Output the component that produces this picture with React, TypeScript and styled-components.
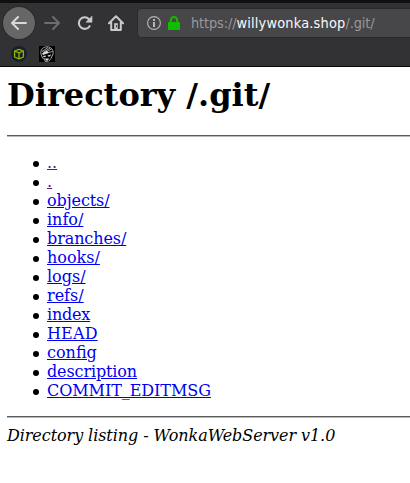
import React from "react";
import styled, { createGlobalStyle } from "styled-components";

const GlobalStyle = createGlobalStyle`
  html, body { margin: 0; padding: 0; background: #fff; overflow: hidden; }
  * { box-sizing: border-box; }
`;

const Window = styled.div`
  width: 100%;
  height: 483px;
  display: flex;
  flex-direction: column;
  overflow: hidden;
  background: #fff;
`;

const Chrome = styled.header`
  flex: none;
  height: 67px;
  border-top: 3px solid #101011;
  border-bottom: 1px solid #0a0a0b;
  background: #323234;
  display: flex;
  flex-direction: column;
`;

const Toolbar = styled.div`
  display: flex;
  align-items: center;
  height: 40px;
  padding-left: 3px;
`;

const BackButton = styled.button`
  width: 32px;
  height: 32px;
  flex: none;
  border: 0;
  padding: 0;
  border-radius: 50%;
  background: #666667;
  box-shadow: 0 0 0 1px #29292b;
  display: grid;
  place-items: center;
`;

const ToolButton = styled.button<{ $width?: number }>`
  width: ${(p) => p.$width ?? 32}px;
  height: 32px;
  flex: none;
  border: 0;
  padding: 0;
  background: none;
  display: grid;
  place-items: center;
`;

const Glyph = styled.svg`
  display: block;
  flex: none;
`;

const AddressBar = styled.div`
  flex: 1;
  height: 30px;
  margin-left: 5px;
  margin-right: -6px;
  padding-left: 9px;
  border: 1px solid #29292b;
  border-radius: 4px;
  background: #474749;
  display: flex;
  align-items: center;
  gap: 6px;
`;

const Url = styled.span`
  margin-left: 4px;
  font: 14.4px/20px "DejaVu Sans Condensed", "DejaVu Sans", sans-serif;
  font-stretch: condensed;
  letter-spacing: -0.13px;
  color: #98989a;
  white-space: pre;
`;

const Host = styled.span`
  color: #f9f9fa;
  letter-spacing: 0.2px;
`;

const Bookmarks = styled.div`
  display: flex;
  align-items: center;
  gap: 12px;
  height: 21px;
  padding-left: 11px;
`;

const Page = styled.main`
  padding-left: 7px;
  font: 16px/19px "DejaVu Serif", serif;
  color: #000;
`;

const Title = styled.h1`
  margin: 9px 0 21px;
  font-size: 32px;
  line-height: 38px;
  font-weight: bold;
`;

const Rule = styled.hr`
  margin: 0;
  border: 0;
  height: 2px;
  background: linear-gradient(#5b5b5b 50%, #b9b9b9 50%);
`;

const Listing = styled.ul`
  margin: 16px 0;
  padding-left: 26px;
  list-style: none;
`;

const Entry = styled.li`
  height: 19px;
  display: flex;
  align-items: flex-start;

  &::before {
    content: "";
    flex: none;
    width: 6px;
    height: 6px;
    margin: 8px 8px 0 0;
    border-radius: 50%;
    background: #000;
  }
`;

const EntryLink = styled.a<{ $visited?: boolean; $tracking?: number }>`
  color: ${(p) => (p.$visited ? "#551a8b" : "#0000ee")};
  text-decoration: underline;
  letter-spacing: ${(p) => (p.$tracking ? `${p.$tracking}px` : "normal")};
`;

const Footer = styled.address`
  margin-top: 8px;
  font-style: italic;
  letter-spacing: -0.075px;
`;

const entries: { name: string; visited?: boolean; tracking?: number }[] = [
  { name: "..", visited: true },
  { name: ".", visited: true },
  { name: "objects/", tracking: -0.1 },
  { name: "info/" },
  { name: "branches/", tracking: -0.1 },
  { name: "hooks/" },
  { name: "logs/" },
  { name: "refs/" },
  { name: "index", tracking: -0.2 },
  { name: "HEAD", tracking: 0.15 },
  { name: "config" },
  { name: "description", tracking: -0.12 },
  { name: "COMMIT_EDITMSG", tracking: -0.06 },
];

const Arrow = ({ color, flip }: { color: string; flip?: boolean }) => (
  <Glyph width="16" height="16" viewBox="0 0 16 16" fill="none" stroke={color} strokeWidth="2" strokeLinecap="round" strokeLinejoin="round">
    <path d={flip ? "M1 8H15M9 2L15 8L9 14" : "M15 8H1M7 2L1 8L7 14"} />
  </Glyph>
);

export default function App() {
  return (
    <Window>
      <GlobalStyle />
      <Chrome>
        <Toolbar>
          <BackButton aria-label="Back"><Arrow color="#d8d8d9" /></BackButton>
          <ToolButton aria-label="Forward" $width={34}><Arrow color="#6d6d6f" flip /></ToolButton>
          <ToolButton aria-label="Reload" $width={31}>
            <Glyph width="16" height="16" viewBox="0 0 16 16">
              <path d="M12 4.2A5.8 5.8 0 1 0 12.6 11.2" fill="none" stroke="#c9c9ca" strokeWidth="2.1" strokeLinecap="round" />
              <path d="M15 1.2V7.2H9Z" fill="#c9c9ca" stroke="#c9c9ca" strokeWidth=".6" strokeLinejoin="round" />
            </Glyph>
          </ToolButton>
          <ToolButton aria-label="Home">
            <Glyph width="16" height="16" viewBox="0 0 16 16" fill="none" stroke="#c9c9ca" strokeWidth="2" strokeLinecap="round" strokeLinejoin="round">
              <path d="M1 8.3L8 1.3L15 8.3M3.2 7.5V15H12.8V7.5" />
              <path d="M6.2 14V8.2H9.8V14Z" fill="#c9c9ca" stroke="none" />
              <path d="M8.6 10.5V12" stroke="#323234" strokeWidth="1" />
            </Glyph>
          </ToolButton>
          <AddressBar>
            <Glyph width="14" height="14" viewBox="0 0 14 14">
              <circle cx="7" cy="7" r="6.4" fill="none" stroke="#b5b5b6" strokeWidth="1.1" />
              <path d="M7 3V5M7 6V11" stroke="#b5b5b6" strokeWidth="2" />
            </Glyph>
            <Glyph width="14" height="16" viewBox="0 0 14 16">
              <rect x="1" y="7" width="12" height="8" rx="1" fill="#12bc00" />
              <path d="M3.8 8V5.2a3.2 3.2 0 0 1 6.4 0V8" fill="none" stroke="#12bc00" strokeWidth="2" />
            </Glyph>
            <Url>https://<Host>willywonka.shop</Host>/.git/</Url>
          </AddressBar>
        </Toolbar>
        <Bookmarks>
          <Glyph width="16" height="16" viewBox="0 0 16 16">
            <circle cx="8" cy="8" r="8" fill="#1a202a" />
            <path d="M8 3.4L12.4 5V11L8 12.8L3.6 11V5ZM3.6 5L8 6.8L12.4 5M8 6.8V12.8" fill="none" stroke="#8db600" strokeWidth="1.3" strokeLinejoin="round" />
          </Glyph>
          <Glyph width="16" height="16" viewBox="0 0 16 16">
            <rect width="16" height="16" fill="#000" />
            <path d="M2 8C1 4 4 .8 8 .8C12 .8 15 4 14 8L12 12.5L10 15M2 8L3.5 12L5.5 12.5L6 15.3H9.5M3 5.5L9 1.5M4 6.5L11 2M8 5.5L12.5 3M8 7L13.5 5.5" fill="none" stroke="#ccc" strokeWidth=".8" />
            <path d="M3 7.5L8 4.5L9.5 7L4 9ZM4 10L7 9.5L6.5 11H4.5ZM8.5 9.5L12 8.5L11 10.5H9ZM6 12.5H10L9 14.5H7Z" fill="#ddd" />
          </Glyph>
        </Bookmarks>
      </Chrome>
      <Page>
        <Title>Directory /.git/</Title>
        <Rule />
        <Listing>
          {entries.map(({ name, visited, tracking }) => (
            <Entry key={name}>
              <EntryLink href="#" $visited={visited} $tracking={tracking}>{name}</EntryLink>
            </Entry>
          ))}
        </Listing>
        <Rule />
        <Footer>Directory listing - WonkaWebServer v1.0</Footer>
      </Page>
    </Window>
  );
}
